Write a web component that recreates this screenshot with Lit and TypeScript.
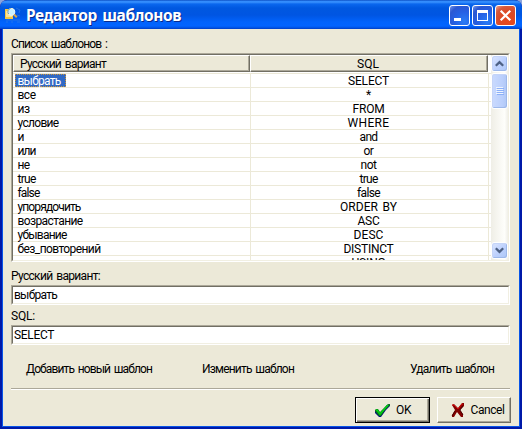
import { LitElement, html, css, svg } from "lit";
import { customElement } from "lit/decorators.js";
import { styleMap } from "lit/directives/style-map.js";

const UI_FONT = '12px Roboto';
const TITLE_FONT = 'bold 15.5px "Noto Sans"';
const WORD_GAP = 1.5;
const canvas = document.createElement("canvas").getContext("2d")!;

/** Text tracked so that it takes up the given width. */
function fit(text: string, width: number, font = UI_FONT) {
  canvas.font = font;
  const gaps = text.split(" ").length - 1;
  const spacing = (width - gaps * WORD_GAP - canvas.measureText(text).width) / text.length;
  return html`<span style=${styleMap({ letterSpacing: `${spacing.toFixed(3)}px`, wordSpacing: `${WORD_GAP}px` })}>${text}</span>`;
}

type Cell = [string, number];
const rows: [Cell, Cell][] = [
  [["выбрать", 43], ["SELECT", 41]],
  [["все", 18], ["*", 5]],
  [["из", 12], ["FROM", 32]],
  [["условие", 41], ["WHERE", 42]],
  [["и", 7], ["and", 18]],
  [["или", 18], ["or", 10]],
  [["не", 12], ["not", 16]],
  [["true", 18], ["true", 18]],
  [["false", 22], ["false", 23]],
  [["упорядочить", 63], ["ORDER BY", 57]],
  [["возрастание", 65], ["ASC", 22]],
  [["убывание", 49], ["DESC", 30]],
  [["без_повторений", 83], ["DISTINCT", 50]],
  [["", 0], ["USING", 34]],
];

const chevron = (d: string) => html`<svg width="9" height="7" viewBox="0 0 9 7">
  ${svg`<path d=${d} fill="none" stroke="#4d6185" stroke-width="2.3"/>`}</svg>`;

@customElement("title-bar")
export class TitleBar extends LitElement {
  static styles = css`
    :host { display: flex; height: 29px; box-sizing: border-box; padding: 0 6px 0 4px;
      border-radius: 7px 7px 0 0;
      background: linear-gradient(#0843b5 0, #2b86fa 1px, #3b93ff 2px, #0a67ee 4px, #0058e0 8px, #0055e2 15px, #0163fc 22px, #0264ff 26px, #0050df 28px, #003bc2 29px); }
    .logo { margin: 6px 0 0 0; width: 18px; height: 18px; flex: none; }
    .title { flex: 1; margin: 4px 0 0 4px; font: bold 15.5px/22px "Noto Sans", sans-serif; color: #fff;
      text-shadow: 1px 1px 0 #0a2a8c; white-space: nowrap; }
    .buttons { display: flex; gap: 2px; margin-top: 5px; }
    .btn { width: 21px; height: 21px; box-sizing: border-box; border: 1px solid #fff; border-radius: 3px;
      background: radial-gradient(circle at 75% 80%, #2a7cf6 0, #2560e4 45%, #2b57d2 75%, #7596ea 100%); }
    .close { background: radial-gradient(circle at 70% 80%, #e8481c 0, #dc4a26 50%, #d65a3c 75%, #efa292 100%); }
    svg { display: block; }
  `;
  render() {
    return html`
      <svg class="logo" viewBox="0 0 18 18">
        <path d="M1 3h4l1-1h3v11H1z" fill="#f5c843"/>
        <path d="M2 5h6v6H2z" fill="#ffe394"/>
        <path d="M12 2l4 2-1 3M13 9l3 1M2 14h14M2 16h2M7 16h2M13 16h3" stroke="#3f83df" stroke-width="1" fill="none" opacity=".55"/>
        <circle cx="7.5" cy="6" r="3.4" fill="#c8efff" stroke="#e9f7ff"/>
        <path d="M4.6 8a3.6 3.6 0 0 1 2-5.6" fill="none" stroke="#6894ac"/>
        <path d="M10 8.5l2.8 2.8" stroke="#d8a44e" stroke-width="2"/>
      </svg>
      <div class="title">${fit("Редактор шаблонов", 155, TITLE_FONT)}</div>
      <div class="buttons">
        <div class="btn"><svg width="19" height="19"><path d="M4 12h7v3H4z" fill="#fff"/></svg></div>
        <div class="btn"><svg width="19" height="19"><path d="M4 4h11v11H4zM5 7v7h9V7z" fill="#fff" fill-rule="evenodd"/></svg></div>
        <div class="btn close"><svg width="19" height="19"><path d="M4.7 4.7l9.6 9.6M14.3 4.7l-9.6 9.6" stroke="#fff" stroke-width="2.2"/></svg></div>
      </div>`;
  }
}

@customElement("scroll-bar")
export class ScrollBar extends LitElement {
  static styles = css`
    :host { display: flex; flex-direction: column; width: 17px; height: 205px;
      background: linear-gradient(90deg, #efeee6, #fefefb 80%, #f0efe8); }
    .btn, .thumb { box-sizing: border-box; border: 1px solid #fff; border-radius: 3px; display: flex;
      align-items: center; justify-content: center;
      background: linear-gradient(135deg, #dce6ff, #bcd0fd 55%, #aec8f7); box-shadow: inset -1px -1px 0 #9db8ea, inset 1px 1px 0 #c4d4f8; }
    .btn { height: 17px; margin-bottom: 1px; flex: none; }
    .thumb { height: 36px; background: linear-gradient(90deg, #cadafe, #bacffc 70%, #b0c7f5); }
    .space { flex: 1; }
  `;
  render() {
    return html`
      <div class="btn">${chevron("M.8 5.8L4.5 2.1 8.2 5.8")}</div>
      <div class="thumb"><svg width="8" height="8" shape-rendering="crispEdges">
        <path d="M0 0h7v1H0zM0 2h7v1H0zM0 4h7v1H0zM0 6h7v1H0z" fill="#eef4fe"/>
        <path d="M1 1h7v1H1zM1 3h7v1H1zM1 5h7v1H1zM1 7h7v1H1z" fill="#8cb0f8"/></svg></div>
      <div class="space"></div>
      <div class="btn">${chevron("M.8 1.2L4.5 4.9 8.2 1.2")}</div>`;
  }
}

@customElement("template-grid")
export class TemplateGrid extends LitElement {
  static styles = css`
    :host { display: flex; box-sizing: border-box; width: 499px; height: 209px; overflow: hidden; background: #fff;
      border: 1px solid; border-color: #aca899 #fff #fff #aca899; }
    .inner { display: flex; flex: 1; border: 1px solid; border-color: #716f64 #f1efe2 #f1efe2 #716f64; overflow: hidden; }
    .table { width: 478px; height: 205px; overflow: hidden; }
    .head { display: flex; height: 17px; width: 475px; }
    .th { box-sizing: border-box; background: #ece9d8; line-height: 14px; white-space: nowrap;
      border: 1px solid; border-color: #fff #716f64 #716f64 #fff; box-shadow: inset -1px -1px 0 #aca899; }
    .name { width: 237px; padding: 1px 0 0 6px; }
    .sql { width: 238px; padding: 1px 2px 0 0; text-align: center; }
    .rows { border-top: 1px solid #ece9d8; margin-top: 1px; }
    .row { display: flex; height: 14px; box-sizing: border-box; border-bottom: 1px solid #ece9d8; line-height: 14px; white-space: nowrap; }
    .a { width: 237px; box-sizing: border-box; padding-left: 4.5px; }
    .b { width: 239px; box-sizing: border-box; border: solid #ece9d8; border-width: 0 1px; padding-right: 2px; text-align: center; }
    .picked { padding-left: 2px; }
    .mark { box-sizing: border-box; display: block; width: 51px; height: 13px; padding-left: 1.5px; line-height: 12px;
      background: #316ac5; border: 1px dotted #ce953a; color: #fff; }
  `;
  render() {
    return html`<div class="inner"><div class="table">
      <div class="head"><div class="th name">${fit("Русский вариант", 86)}</div><div class="th sql">${fit("SQL", 22)}</div></div>
      <div class="rows">${rows.map(([a, b], i) => html`<div class="row">
        ${i === 0
          ? html`<div class="a picked"><span class="mark">${fit(...a)}</span></div>`
          : html`<div class="a">${a[0] ? fit(...a) : ""}</div>`}
        <div class="b">${fit(...b)}</div></div>`)}</div>
      </div><scroll-bar></scroll-bar></div>`;
  }
}

@customElement("app-root")
export class AppRoot extends LitElement {
  static styles = css`
    :host { display: block; width: 522px; height: 429px; overflow: hidden; background: #8ba5dc;
      font: 12px/14px Roboto, "Liberation Sans", sans-serif; color: #000; }
    .window { height: 429px; box-sizing: border-box; border-radius: 7px 7px 0 0; background: #0019a8; overflow: hidden; }
    .body { box-sizing: border-box; height: 398px; margin: 0 2px; border: solid #0855e8; border-width: 0 1px 1px;
      background: #ece9d8; padding: 8px 8px 0; white-space: nowrap; }
    .label { height: 16px; }
    .second { margin-top: 4px; }
    .first { margin-top: 7px; }
    .input { box-sizing: border-box; width: 499px; height: 20px; background: #fff; border: 1px solid;
      border-color: #aca899 #fff #fff #aca899; }
    .input div { box-sizing: border-box; height: 18px; padding: 1px 0 0 1px; border: 1px solid;
      border-color: #716f64 #f1efe2 #f1efe2 #716f64; }
    .links { display: flex; margin: 17px 0 0 15px; height: 26px; }
    .edit { margin-left: 50px; }
    .remove { margin-left: 116px; }
    .rule { width: 499px; border-top: 1px solid #aca899; border-bottom: 1px solid #fff; }
    .actions { display: flex; gap: 7px; margin: 7px 0 0 344px; }
    .button { box-sizing: border-box; width: 76px; height: 26px; display: flex; align-items: center; background: #ece9d8;
      border: 1px solid; border-color: #fff #716f64 #716f64 #fff; box-shadow: inset -1px -1px 0 #aca899; padding-left: 13px; }
    .default { border-color: #000; box-shadow: inset 1px 1px 0 #fff, inset -1px -1px 0 #716f64, inset -2px -2px 0 #aca899; padding-left: 18px; }
    .ok { margin: 1px 5px 0 0; flex: none; }
    .no { margin: 1px 6px 0 0; flex: none; }
  `;
  render() {
    return html`<div class="window">
      <title-bar></title-bar>
      <div class="body">
        <div class="label">${fit("Список шаблонов :", 96)}</div>
        <template-grid></template-grid>
        <div class="label first">${fit("Русский вариант:", 89)}</div>
        <div class="input"><div>${fit("выбрать", 43)}</div></div>
        <div class="label second">${fit("SQL:", 24)}</div>
        <div class="input"><div>${fit("SELECT", 40)}</div></div>
        <div class="links">
          <div>${fit("Добавить новый шаблон", 126)}</div>
          <div class="edit">${fit("Изменить шаблон", 92)}</div>
          <div class="remove">${fit("Удалить шаблон", 84)}</div>
        </div>
        <div class="rule"></div>
        <div class="actions">
          <div class="button default">
            <svg class="ok" width="17" height="15" viewBox="0 0 17 15">
              <path d="M1 8l1-1h2l2 3 7-8 2-1h1v2l-4 4-5 7H5L1 10z" fill="#00117c"/>
              <path d="M1 7l1-1h2l2 3 7-7 2-1h1v1l-5 5-4 6H5L1 8z" fill="#087b13"/>
              <path d="M2 7h1l3 4 8-9" stroke="#00cf16" stroke-width="1.5" fill="none"/>
            </svg>${fit("OK", 15.5)}
          </div>
          <div class="button">
            <svg class="no" width="14" height="15" viewBox="0 0 14 15">
              <path d="M1 2l2-1 4 4 4-5h2v3l-4 4 3 4v3h-2l-4-5-3 5H1v-2l3-5z" fill="#810000"/>
              <path d="M1 2h2l4 4 4-5h1" stroke="#d50a0a" fill="none"/>
              <path d="M12 3L9 7l3 5M1 13l3-5" stroke="#3b0000" fill="none" stroke-width=".8"/>
            </svg>${fit("Cancel", 34)}
          </div>
        </div>
      </div>
    </div>`;
  }
}
